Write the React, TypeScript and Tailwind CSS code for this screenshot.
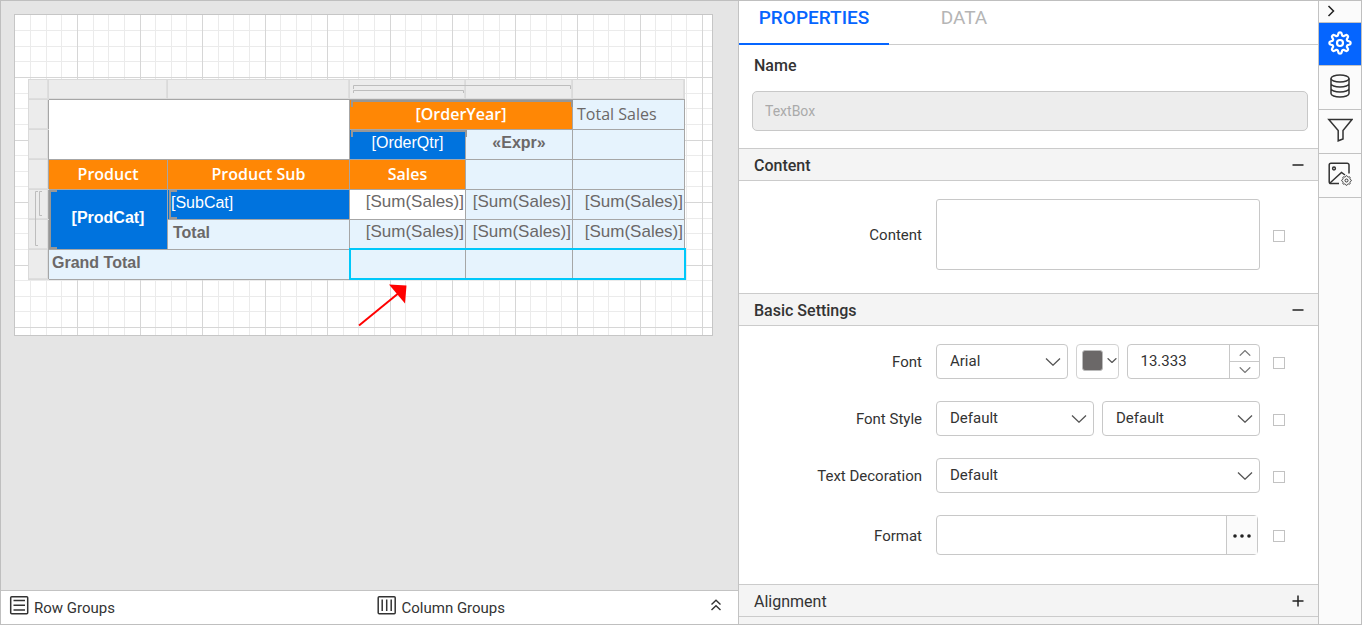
import type { ReactNode } from 'react';

const GRID_STEP = 15.625;

function gearPath(cx: number, cy: number, outer: number, inner: number, teeth: number) {
  const points: string[] = [];
  const steps = teeth * 12;
  for (let i = 0; i < steps; i++) {
    const a = (i / steps) * Math.PI * 2;
    const wave = Math.cos(a * teeth);
    const shaped = Math.tanh(wave * 1.6) / Math.tanh(1.6);
    const r = (outer + inner) / 2 + (shaped * (outer - inner)) / 2;
    points.push(`${(cx + r * Math.sin(a)).toFixed(2)} ${(cy - r * Math.cos(a)).toFixed(2)}`);
  }
  return `M${points.join('L')}Z`;
}

function CanvasGrid() {
  const lines = (count: number) => Array.from({ length: count }, (_, i) => i + 1);
  const place = (i: number) => Math.floor(i * GRID_STEP) + 0.5;
  const minor = (n: number) => lines(n).filter((i) => i % 4 !== 0);
  const major = (n: number) => lines(n).filter((i) => i % 4 === 0);
  return (
    <svg className="absolute inset-0 h-full w-full" aria-hidden="true">
      <g stroke="#ebebeb">
        {minor(44).map((i) => <line key={`x${i}`} x1={place(i)} x2={place(i)} y1="0" y2="100%" />)}
        {minor(20).map((i) => <line key={`y${i}`} y1={place(i)} y2={place(i)} x1="0" x2="100%" />)}
      </g>
      <g stroke="#d6d6d6">
        {major(44).map((i) => <line key={`x${i}`} x1={place(i)} x2={place(i)} y1="0" y2="100%" />)}
        {major(20).map((i) => <line key={`y${i}`} y1={place(i)} y2={place(i)} x1="0" x2="100%" />)}
      </g>
    </svg>
  );
}

function GroupMarks() {
  return (
    <svg className="pointer-events-none absolute top-0 left-0" width="657" height="200" fill="none" aria-hidden="true">
      <g stroke="#bdbdbd">
        <path d="M325.5 10V6.5H542.5V10" />
        <path d="M325.5 14V11.5H435.5V14" />
        <path d="M10 112.5H7.5V166.5H10" />
        <path d="M14 112.5H11.5V136.5H14" />
      </g>
      <g stroke="#979797" strokeWidth="2">
        <path d="M324 28V22H544V28" />
        <path d="M324 58V52H438V58" />
        <path d="M29 112H22V169H29" />
        <path d="M149 112H142V139H149" />
      </g>
    </svg>
  );
}

const cell = 'border border-[#a6a6a6] p-0';
const head = `${cell} bg-[#ff8705] pb-[2px] text-center font-["Open_Sans",sans-serif] text-[16px] font-semibold text-white`;
const pale = `${cell} bg-[#e6f3fd]`;
const blue = `${cell} bg-[#0073de] text-white`;
const sum = 'pb-[6px] pr-px text-right align-middle text-[17px]';
const gutter = 'border border-[#dadada] bg-[#ececec] p-0 shadow-[inset_-1px_-1px_0_#dedede]';
const gutterTop = `${gutter} border-b-[#a6a6a6]`;
const gutterSide = `${gutter} border-r-[#a6a6a6]`;

function Tablix() {
  return (
    <table className='w-[657px] table-fixed border-collapse font-["Liberation_Sans",sans-serif] text-[16px] leading-5 text-[#6b6868]'>
      <colgroup>
        <col className="w-5" />
        <col className="w-[119px]" />
        <col className="w-[182px]" />
        <col className="w-[116px]" />
        <col className="w-[107px]" />
        <col className="w-[112px]" />
      </colgroup>
      <tbody>
        <tr className="h-5">
          <td className={gutter} /><td className={gutterTop} /><td className={gutterTop} />
          <td className={gutterTop} /><td className={gutterTop} /><td className={gutterTop} />
        </tr>
        <tr className="h-[30px]">
          <td className={gutterSide} />
          <td className={`${cell} bg-white`} colSpan={2} rowSpan={2} />
          <th className={head} colSpan={2}>[OrderYear]</th>
          <td className={`${pale} pb-[2px] pl-1 font-["Open_Sans",sans-serif]`}>Total Sales</td>
        </tr>
        <tr className="h-[30px]">
          <td className={gutterSide} />
          <td className={`${blue} pb-1 text-center`}>[OrderQtr]</td>
          <td className={`${pale} pb-1 text-center font-bold`}>«Expr»</td>
          <td className={pale} />
        </tr>
        <tr className="h-[30px]">
          <td className={gutterSide} />
          <th className={head}>Product</th>
          <th className={head}>Product Sub</th>
          <th className={head}>Sales</th>
          <td className={pale} />
          <td className={pale} />
        </tr>
        <tr className="h-[30px]">
          <td className={gutterSide} />
          <td className={`${blue} pb-1 text-center font-bold`} rowSpan={2}>[ProdCat]</td>
          <td className={`${blue} pb-1 pl-[3px]`}>[SubCat]</td>
          <td className={`${cell} bg-white ${sum}`}>[Sum(Sales)]</td>
          <td className={`${pale} ${sum}`}>[Sum(Sales)]</td>
          <td className={`${pale} ${sum}`}>[Sum(Sales)]</td>
        </tr>
        <tr className="h-[30px]">
          <td className={gutterSide} />
          <td className={`${pale} pb-1 pl-[5px] font-bold`}>Total</td>
          <td className={`${pale} ${sum}`}>[Sum(Sales)]</td>
          <td className={`${pale} ${sum}`}>[Sum(Sales)]</td>
          <td className={`${pale} ${sum}`}>[Sum(Sales)]</td>
        </tr>
        <tr className="h-[30px]">
          <td className={gutterSide} />
          <td className={`${pale} pb-1 pl-[3px] font-bold`} colSpan={2}>Grand Total</td>
          <td className={pale} /><td className={pale} /><td className={pale} />
        </tr>
      </tbody>
    </table>
  );
}

function Chevron({ className = 'h-2 w-4', up = false, double = false }: { className?: string; up?: boolean; double?: boolean }) {
  if (double) {
    return (
      <svg className={className} viewBox="0 0 12 12" fill="none" stroke="#333" strokeWidth="1.4" aria-hidden="true">
        <path d="M1.5 5.5L6 1.2L10.5 5.5M1.5 11L6 6.7L10.5 11" />
      </svg>
    );
  }
  return (
    <svg className={className} viewBox="0 0 16 8" fill="none" stroke="currentColor" strokeWidth="1.3" aria-hidden="true">
      <path vectorEffect="non-scaling-stroke" d={up ? 'M1 7.5L8 0.8L15 7.5' : 'M1 0.5L8 7.2L15 0.5'} />
    </svg>
  );
}

function Designer() {
  return (
    <main className="flex min-w-0 flex-col bg-[#e5e5e5]">
      <div className="flex-1 overflow-hidden p-[13px]">
        <div className="relative h-[322px] w-[699px] border border-[#c6c6c6] bg-white pt-16 pl-[13px]">
          <CanvasGrid />
          <div className="relative w-[657px]">
            <Tablix />
            <GroupMarks />
            <div className="absolute top-[169px] left-[321px] h-8 w-[337px] border-2 border-[#00c8fa]" />
            <svg className="absolute top-[204px] left-[328px]" width="54" height="46" aria-hidden="true">
              <path d="M3 42.5L44 9" stroke="#f00" strokeWidth="2" />
              <path d="M33 1.5L50.5 2.5L49 20.5Z" fill="#f00" />
            </svg>
          </div>
        </div>
      </div>
      <footer className="flex h-[34px] items-center border-t border-[#c3c3c3] bg-white text-[15px] text-[#333]">
        <div className="flex flex-1 items-center gap-[5px] pl-2">
          <svg width="20" height="20" viewBox="0 0 20 20" fill="none" stroke="#333" strokeWidth="1.5" className="mb-[5px]" aria-hidden="true">
            <rect x="1.7" y="1.7" width="17" height="17" rx="1" />
            <path d="M4.5 5.5H16M4.5 10.2H16M4.5 15H16" />
          </svg>
          <span className="pt-px">Row Groups</span>
        </div>
        <div className="flex flex-1 items-center gap-[5px] pl-[6px]">
          <svg width="20" height="20" viewBox="0 0 20 20" fill="none" stroke="#333" strokeWidth="1.5" className="mb-[5px]" aria-hidden="true">
            <rect x="1.2" y="1.7" width="17" height="17" rx="1" />
            <path d="M5.2 4.5V16M9.7 4.5V16M14.2 4.5V16" />
          </svg>
          <span className="flex-1 pt-px">Column Groups</span>
          <button type="button" aria-label="Expand groups" className="mr-4 mb-[5px]">
            <Chevron double className="h-3 w-3" />
          </button>
        </div>
      </footer>
    </main>
  );
}

function SectionHeader({ title, open = true }: { title: string; open?: boolean }) {
  return (
    <h2 className="border-y border-[#cbcbcb] bg-[#f4f4f4] text-[16px]">
      <button type="button" aria-expanded={open} className={`flex h-[31px] w-full items-center justify-between pr-[14px] pl-[15px] ${open ? 'font-medium' : ''}`}>
        <span className="pt-[2px]">{title}</span>
        <svg width="12" height="12" viewBox="0 0 12 12" stroke="#222" strokeWidth="1.5" aria-hidden="true">
          <path d={open ? 'M0.5 6H11.5' : 'M0.5 6H11.5M6 0.5V11.5'} />
        </svg>
      </button>
    </h2>
  );
}

function Field({ id, label, children }: { id: string; label: string; children: ReactNode }) {
  return (
    <div className="flex items-center gap-[13px] pr-[33px]">
      <label htmlFor={id} className="w-[184px] pt-[2px] pr-px text-right text-[15px]">{label}</label>
      <div className="flex min-w-0 flex-1 gap-2">{children}</div>
      <input type="checkbox" aria-label={`Reset ${label}`} className="mt-[2px] h-3 w-3 appearance-none border border-[#c2c2c2] bg-white" />
    </div>
  );
}

function Select({ id, value, label }: { id: string; value: string; label: string }) {
  return (
    <div className="relative min-w-0 flex-1">
      <select id={id} aria-label={label} defaultValue={value} className="h-[35px] w-full appearance-none rounded-sm border border-[#c8c8c8] bg-white pr-8 pl-[13px] text-[15px]">
        <option>{value}</option>
      </select>
      <span className="pointer-events-none absolute inset-y-0 right-[7px] flex items-center text-[#555]">
        <Chevron />
      </span>
    </div>
  );
}

function Properties() {
  return (
    <section className="flex min-w-0 flex-col border-l border-[#c3c3c3] bg-white text-[15px] text-[#333]">
      <div role="tablist" className="flex h-11 border-b border-[#ccc] text-[19px]">
        <button type="button" role="tab" aria-selected="true" className="-mb-px w-[150px] border-b-2 border-[#0565ff] pb-2 font-medium text-[#0565ff]">PROPERTIES</button>
        <button type="button" role="tab" aria-selected="false" className="w-[150px] pb-[9px] text-[#b5b5b5]">DATA</button>
      </div>
      <div className="flex flex-col gap-[15px] pt-[11px] pr-[10px] pb-[17px] pl-[13px]">
        <label htmlFor="name" className="pl-[2px] text-[16px] leading-5 font-medium">Name</label>
        <input id="name" disabled placeholder="TextBox" className="h-10 rounded-[5px] border border-[#c8c8c8] bg-[#ededed] px-3 text-[14px] placeholder:text-[#aaa]" />
      </div>
      <SectionHeader title="Content" />
      <div className="pt-[18px] pb-[23px]">
        <Field id="content" label="Content">
          <textarea id="content" className="block h-[71px] w-full resize-none rounded-[3px] border border-[#c8c8c8]" />
        </Field>
      </div>
      <SectionHeader title="Basic Settings" />
      <div className="flex flex-col gap-[22px] pt-[18px] pb-[29px]">
        <Field id="font" label="Font">
          <Select id="font" value="Arial" label="Font" />
          <button type="button" aria-label="Font colour" className="flex h-[35px] w-[43px] items-center gap-1 rounded-sm border border-[#d2d2d2] pb-[2px] pl-[5px] text-[#555]">
            <span className="h-[21px] w-[21px] rounded-[3px] border border-[#bbb] bg-[#6b6868]" />
            <Chevron className="h-[5px] w-[10px]" />
          </button>
          <div className="flex h-[35px] min-w-0 flex-1 rounded-sm border border-[#c8c8c8]">
            <input type="text" inputMode="decimal" aria-label="Font size" defaultValue="13.333" className="min-w-0 flex-1 rounded-sm pl-[13px]" />
            <div className="flex w-[30px] flex-col border-l border-[#c8c8c8] text-[#777]">
              <button type="button" aria-label="Increase" className="flex flex-1 items-center justify-center border-b border-[#c8c8c8]"><Chevron up className="h-[6px] w-3" /></button>
              <button type="button" aria-label="Decrease" className="flex flex-1 items-center justify-center"><Chevron className="h-[6px] w-3" /></button>
            </div>
          </div>
        </Field>
        <Field id="style" label="Font Style">
          <Select id="style" value="Default" label="Font Style" />
          <Select id="weight" value="Default" label="Font Weight" />
        </Field>
        <Field id="decoration" label="Text Decoration">
          <Select id="decoration" value="Default" label="Text Decoration" />
        </Field>
        <Field id="format" label="Format">
          <div className="mr-[2px] flex h-10 flex-1 rounded-sm border border-[#c8c8c8]">
            <input id="format" type="text" className="min-w-0 flex-1 rounded-sm px-3" />
            <button type="button" aria-label="More formats" className="flex w-[31px] items-center justify-center border-l border-[#c8c8c8] bg-[#fbfbfb] pt-[2px]">
              <svg width="18" height="4" fill="#222" aria-hidden="true">
                <circle cx="2" cy="2" r="1.8" /><circle cx="9" cy="2" r="1.8" /><circle cx="16" cy="2" r="1.8" />
              </svg>
            </button>
          </div>
        </Field>
      </div>
      <SectionHeader title="Alignment" open={false} />
      <div className="flex-1 bg-[#f4f4f4]" />
    </section>
  );
}

function Rail() {
  const item = 'flex h-11 items-center justify-center border-b border-[#c3c3c3] pb-[3px]';
  return (
    <nav className="flex flex-col border-l border-[#c3c3c3] bg-[#fbfbfb]">
      <button type="button" aria-label="Collapse panel" className="flex h-[22px] items-center border-b border-[#c3c3c3] pb-[2px] pl-2">
        <svg width="8" height="12" viewBox="0 0 8 12" fill="none" stroke="#222" strokeWidth="1.5" aria-hidden="true"><path d="M1.5 1L6.5 6L1.5 11" /></svg>
      </button>
      <button type="button" aria-label="Properties" className="flex h-[43px] items-center justify-center border-b border-[#c3c3c3] bg-[#0565ff] pb-[2px]">
        <svg width="26" height="26" viewBox="0 0 26 26" fill="none" stroke="#fff" strokeWidth="2.2" strokeLinejoin="round" aria-hidden="true">
          <path d={gearPath(13, 13, 10.6, 7.6, 8)} /><circle cx="13" cy="13" r="3" />
        </svg>
      </button>
      <button type="button" aria-label="Data" className={item}>
        <svg width="22" height="24" viewBox="0 0 22 24" fill="none" stroke="#333" strokeWidth="1.5" aria-hidden="true">
          <ellipse cx="11" cy="4.5" rx="9" ry="3.5" />
          <path d="M2 4.5V19.5C2 21.4 6 23 11 23S20 21.4 20 19.5V4.5M2 9.5C2 11.4 6 13 11 13S20 11.4 20 9.5M2 14.5C2 16.4 6 18 11 18S20 16.4 20 14.5" />
        </svg>
      </button>
      <button type="button" aria-label="Filters" className={item}>
        <svg width="26" height="24" viewBox="0 0 26 24" fill="none" stroke="#333" strokeWidth="1.5" aria-hidden="true">
          <path d="M1.8 1.5H25L16 12.5V21L11.2 22.8V12.5Z" />
        </svg>
      </button>
      <button type="button" aria-label="Image settings" className={item}>
        <svg width="24" height="24" viewBox="0 0 24 24" fill="none" stroke="#333" strokeWidth="1.5" aria-hidden="true">
          <path d="M11 21.5H3A1.8 1.8 0 0 1 1.2 19.7V3A1.8 1.8 0 0 1 3 1.2H19.2A1.8 1.8 0 0 1 21 3V11.5" />
          <circle cx="6" cy="6.5" r="1.4" />
          <path d="M2 21L13.5 10.5L17 13" />
          <path d={gearPath(18.5, 18.5, 4.8, 3.8, 8)} strokeWidth="1" /><circle cx="18.5" cy="18.5" r="1.5" strokeWidth="1" />
        </svg>
      </button>
    </nav>
  );
}

export default function App() {
  return (
    <div className="grid min-h-screen grid-cols-[minmax(0,1fr)_580px_43px] border border-[#bfbfbf] font-[Roboto,sans-serif]">
      <Designer />
      <Properties />
      <Rail />
    </div>
  );
}
